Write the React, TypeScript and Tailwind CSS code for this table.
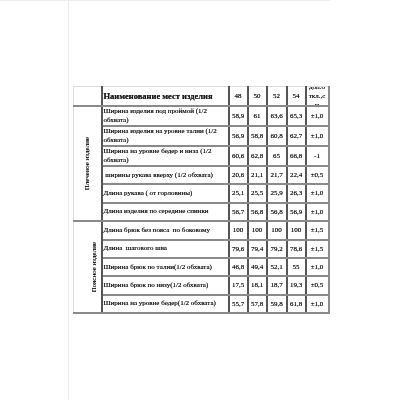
const shoulder = [
    { name: ['Ширина изделия под проймой (1/2', 'обхвата)'], v: ['58,9', '61', '63,6', '65,3', '±1,0'] },
    { name: ['Ширина изделия на уровне талии (1/2', 'обхвата)'], v: ['56,9', '58,8', '60,8', '62,7', '±1,0'] },
    { name: ['Ширина на уровне бедер и низа (1/2', 'обхвата)'], v: ['60,6', '62,8', '65', '66,8', '-1'] },
    { name: ['\u00a0ширины рукава вверху (1/2 обхвата)'], v: ['20,6', '21,1', '21,7', '22,4', '±0,5'] },
    { name: ['Длина рукава ( от горловины)'], v: ['25,1', '25,5', '25,9', '26,3', '±1,0'] },
    { name: ['Длина изделия по середине спинки'], v: ['56,7', '56,8', '56,8', '56,9', '±1,0'] },
];

const waist = [
    { name: ['Длина брюк без пояса \u00a0по боковому'], v: ['100', '100', '100', '100', '±1,5'] },
    { name: ['Длина \u00a0шагового шва'], v: ['79,6', '79,4', '79,2', '78,6', '±1,5'] },
    { name: ['Ширина брюк по талии(1/2 обхвата)'], v: ['46,8', '49,4', '52,1', '55', '±1,0'] },
    { name: ['Ширина брюк по низу(1/2 обхвата)'], v: ['17,5', '18,1', '18,7', '19,3', '±0,5'] },
    { name: ['Ширина на уровне бедер(1/2 обхвата)'], v: ['55,7', '57,8', '59,8', '61,8', '±1,0'] },
];

type Row = { name: string[]; v: string[] };

function DataRow({ row, group }: { row: Row; group?: { label: string; span: number; shift?: boolean } }) {
    return (
        <tr className="h-[18.4px]">
            {group && (
                <td
                    rowSpan={group.span}
                    className="border-b-2 border-b-[#8a8a8a] border-r-2 border-r-[#555] border-l border-l-[#dcdcdc] p-0"
                >
                    <div className={group.shift ? 'flex justify-end pr-[1px]' : 'flex justify-center'}>
                        <span className="rotate-180 whitespace-nowrap [writing-mode:vertical-rl]">{group.label}</span>
                    </div>
                </td>
            )}
            <td className="border-b-2 border-b-[#8a8a8a] border-r-2 border-r-[#555] py-0 pl-[1px] pr-0 align-middle leading-[9px]">
                {row.name.map((line, i) => (
                    <div key={i} className="whitespace-pre">
                        {line}
                    </div>
                ))}
            </td>
            {row.v.map((val, i) => (
                <td
                    key={i}
                    className={
                        i === 4
                            ? 'border-b-2 border-b-[#8a8a8a] border-r-2 border-r-[#8a8a8a] p-0 text-center'
                            : 'border-b-2 border-b-[#8a8a8a] border-r-2 border-r-[#555] p-0 text-center'
                    }
                >
                    {val}
                </td>
            ))}
        </tr>
    );
}

export default function App() {
    return (
        <div className="h-[400px] w-[400px] overflow-hidden bg-white font-['Liberation_Serif',serif] text-[7px] text-[#1a1a1a] will-change-transform [text-shadow:0_0_0.4px_#333]">
            <div className="h-px w-[330px] bg-[#eeeeee]" />
            <div className="ml-[68px] h-[399px] border-l border-[#ececec] pl-[4px] pt-[85px]">
                <table className="w-[255px] table-fixed border-collapse">
                    <colgroup>
                        <col className="w-[28px]" />
                        <col className="w-[127px]" />
                        <col className="w-[19px]" />
                        <col className="w-[19px]" />
                        <col className="w-[20px]" />
                        <col className="w-[19px]" />
                        <col className="w-[23px]" />
                    </colgroup>
                    <thead>
                        <tr className="h-[18.4px]">
                            <td className="border-t border-t-[#dcdcdc] border-l border-l-[#dcdcdc] border-b-2 border-b-[#8a8a8a] border-r-2 border-r-[#555] p-0" />
                            <td className="border-t border-t-[#dcdcdc] border-b-2 border-b-[#8a8a8a] border-r-2 border-r-[#555] py-0 pl-[1px] text-[8.5px] font-bold">
                                Наименование мест изделия
                            </td>
                            {['48', '50', '52', '54'].map((s) => (
                                <td
                                    key={s}
                                    className="border-t border-t-[#dcdcdc] border-b-2 border-b-[#8a8a8a] border-r-2 border-r-[#555] p-0 text-center"
                                >
                                    {s}
                                </td>
                            ))}
                            <td className="border-t border-t-[#dcdcdc] border-b-2 border-b-[#8a8a8a] border-r-2 border-r-[#8a8a8a] p-0">
                                <div className="flex h-[18px] flex-col items-center justify-center overflow-hidden leading-[9px]">
                                    <span>доп.о</span>
                                    <span>ткл.,с</span>
                                    <span>м</span>
                                </div>
                            </td>
                        </tr>
                    </thead>
                    <tbody>
                        {shoulder.map((row, i) => (
                            <DataRow
                                key={'s' + i}
                                row={row}
                                group={i === 0 ? { label: 'Плечевое изделие', span: shoulder.length } : undefined}
                            />
                        ))}
                        {waist.map((row, i) => (
                            <DataRow
                                key={'w' + i}
                                row={row}
                                group={i === 0 ? { label: 'Поясное изделие', span: waist.length, shift: true } : undefined}
                            />
                        ))}
                    </tbody>
                </table>
            </div>
        </div>
    );
}
